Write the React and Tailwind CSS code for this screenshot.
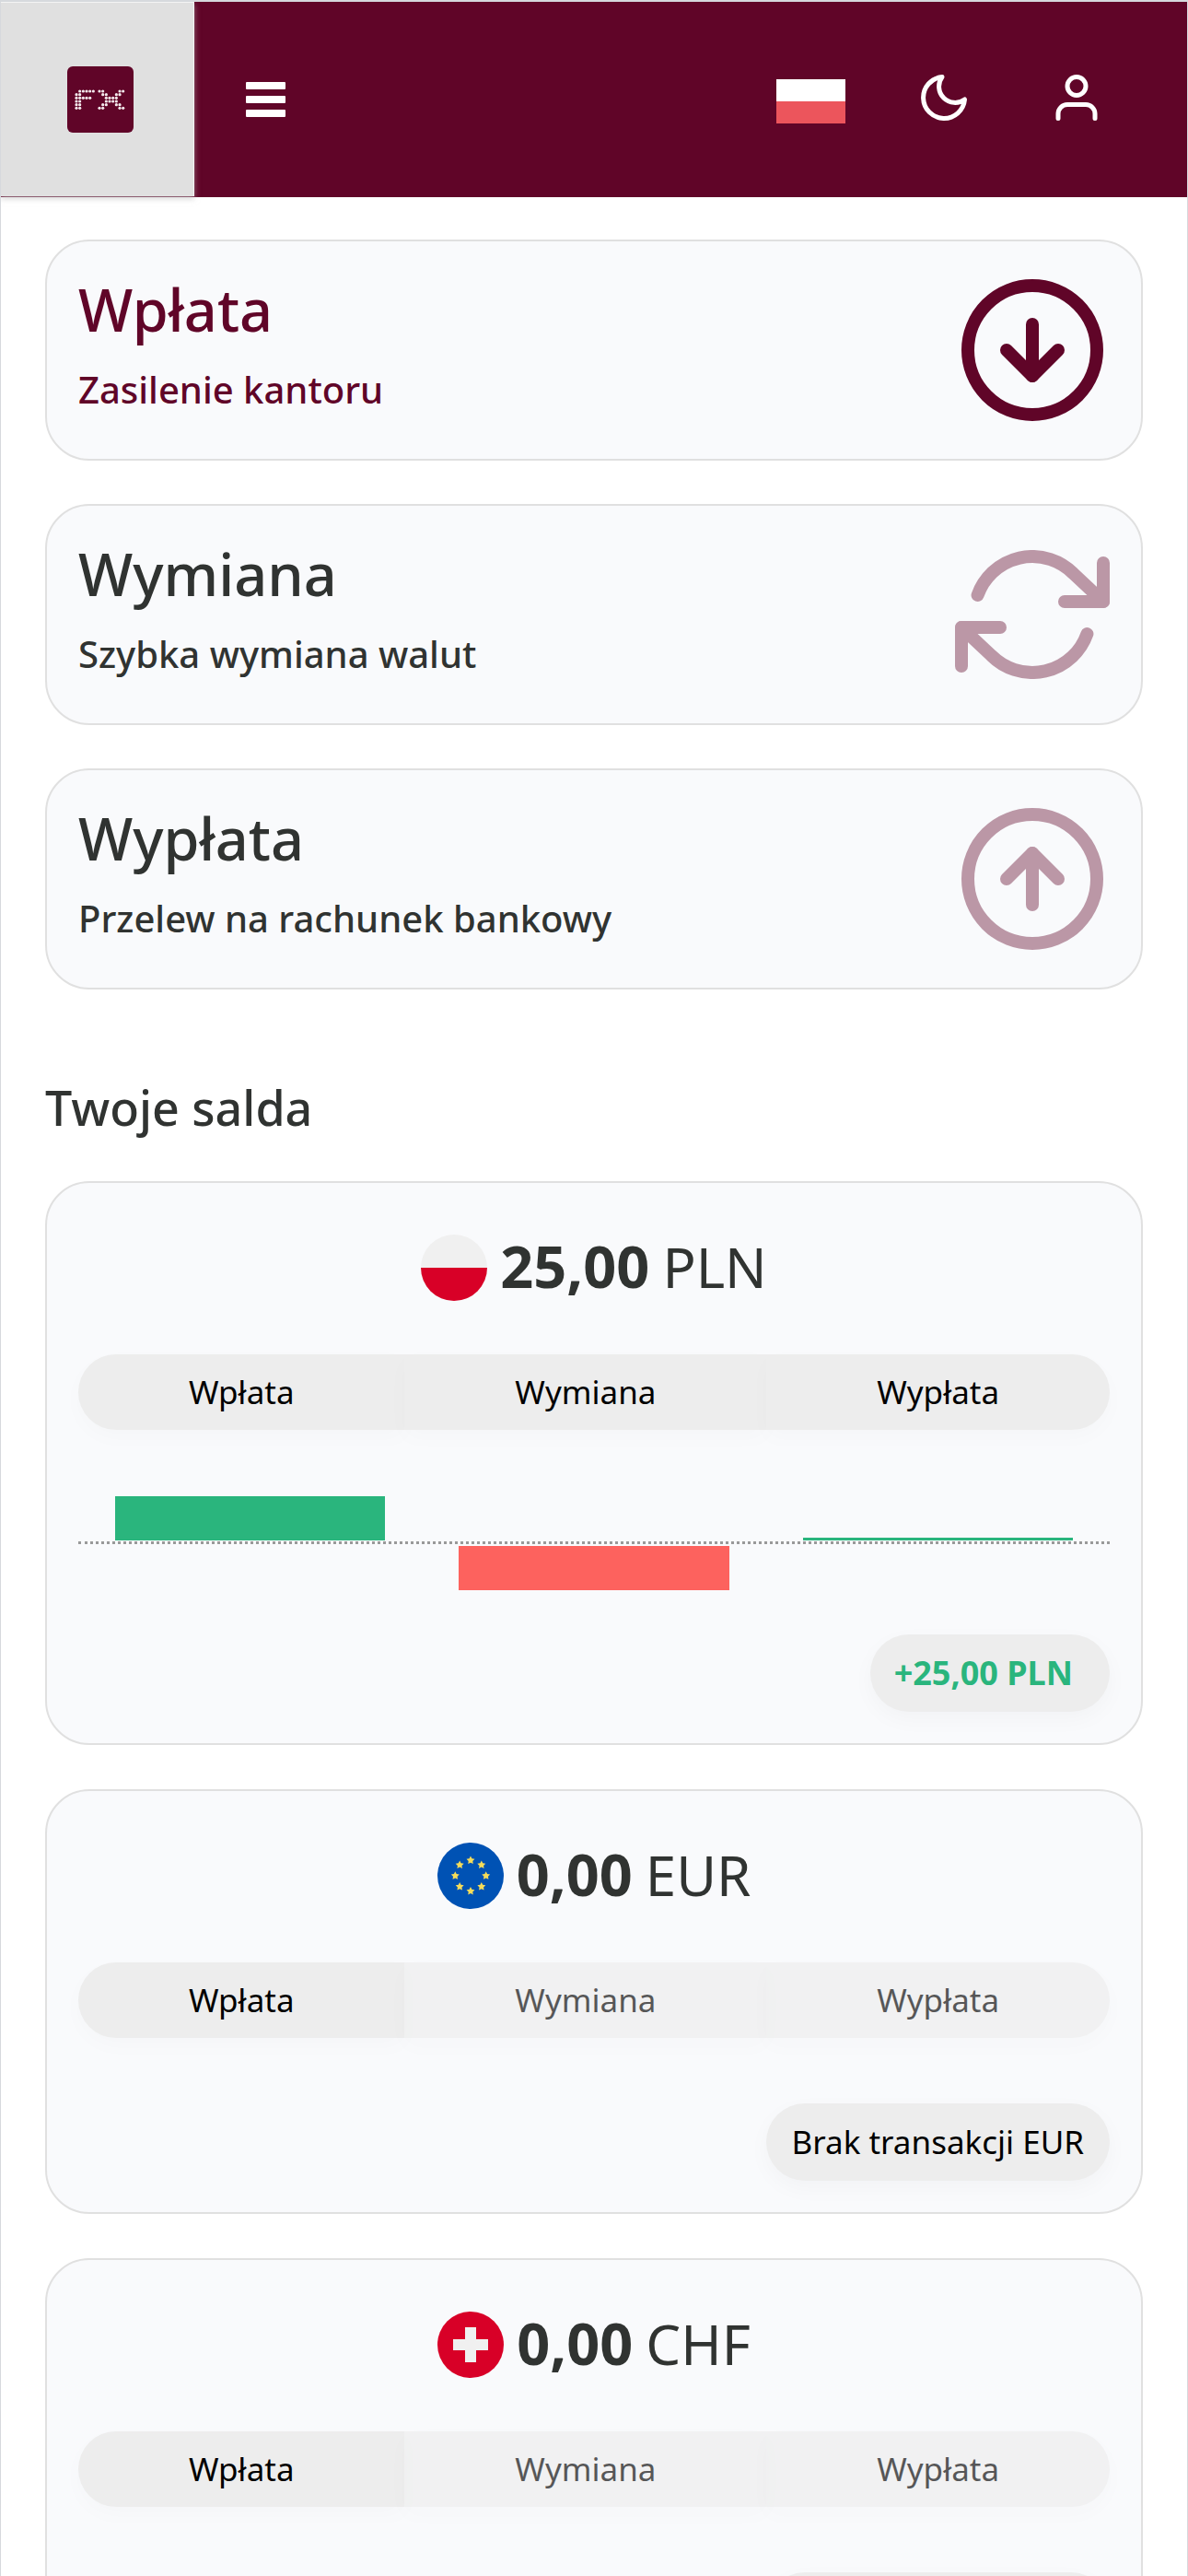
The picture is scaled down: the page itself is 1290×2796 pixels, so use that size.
import React from "react";

const GLYPH_F = [".#####", "##....", "#####.", "##....", "##....", "##...."];
const GLYPH_X = ["##....##", ".##..##.", "..####..", "..####..", ".##..##.", "##....##"];

function dots(rows, x0) {
  return rows.flatMap((row, r) =>
    [...row].map((c, i) =>
      c === "#" ? <circle key={`${x0}-${r}-${i}`} cx={x0 + i * 3.67} cy={27 + r * 3.67} r="1.6" /> : null
    )
  );
}

function Logo() {
  return (
    <svg viewBox="0 0 72 72" className="size-[72px]" aria-hidden="true">
      <rect width="72" height="72" rx="6" fill="#600528" />
      <g fill="#f3e9ec">
        {dots(GLYPH_F, 10)}
        {dots(GLYPH_X, 35)}
      </g>
    </svg>
  );
}

function LineIcon({ className, children }) {
  return (
    <svg
      viewBox="0 0 24 24"
      fill="none"
      stroke="currentColor"
      strokeWidth="2"
      strokeLinecap="round"
      strokeLinejoin="round"
      className={className}
      aria-hidden="true"
    >
      {children}
    </svg>
  );
}

const ArrowDownCircle = (
  <>
    <circle cx="12" cy="12" r="10" />
    <polyline points="8 12 12 16 16 12" />
    <line x1="12" y1="8" x2="12" y2="16" />
  </>
);

const ArrowUpCircle = (
  <>
    <circle cx="12" cy="12" r="10" />
    <polyline points="16 12 12 8 8 12" />
    <line x1="12" y1="16" x2="12" y2="8" />
  </>
);

const Refresh = (
  <>
    <polyline points="23 4 23 10 17 10" />
    <polyline points="1 20 1 14 7 14" />
    <path d="M3.51 9a9 9 0 0 1 14.85-3.36L23 10M1 14l4.64 4.36A9 9 0 0 0 20.49 15" />
  </>
);

function Star({ angle }) {
  const a = (angle * Math.PI) / 180;
  const cx = 36 + 16.7 * Math.sin(a);
  const cy = 36 - 16.7 * Math.cos(a);
  const points = Array.from({ length: 10 }, (_, i) => {
    const r = i % 2 ? 2.4 : 4.7;
    const t = (i * Math.PI) / 5;
    return `${(cx + r * Math.sin(t)).toFixed(2)},${(cy - r * Math.cos(t)).toFixed(2)}`;
  }).join(" ");
  return <polygon points={points} fill="#f5dc5a" />;
}

const FLAGS = {
  PLN: (
    <>
      <circle cx="36" cy="36" r="36" fill="#f0f0f0" />
      <path d="M0 36a36 36 0 0 0 72 0z" fill="#d80027" />
    </>
  ),
  EUR: (
    <>
      <circle cx="36" cy="36" r="36" fill="#0052b4" />
      {[0, 45, 90, 135, 180, 225, 270, 315].map((a) => (
        <Star key={a} angle={a} />
      ))}
    </>
  ),
  CHF: (
    <>
      <circle cx="36" cy="36" r="36" fill="#d80027" />
      <path d="M30 17h12v13h13v12H42v13H30V42H17V30h13z" fill="#f0f0f0" />
    </>
  ),
};

const ACTIONS = [
  { title: "Wpłata", text: "Zasilenie kantoru", icon: ArrowDownCircle, active: true },
  { title: "Wymiana", text: "Szybka wymiana walut", icon: Refresh },
  { title: "Wypłata", text: "Przelew na rachunek bankowy", icon: ArrowUpCircle },
];

const BALANCES = [
  { code: "PLN", amount: "25,00", enabled: true, change: "+25,00 PLN", bars: [48, -48, 3] },
  { code: "EUR", amount: "0,00", enabled: false },
  { code: "CHF", amount: "0,00", enabled: false },
];

function Header() {
  return (
    <header className="relative z-10 flex h-[212px] shrink-0 items-start bg-[#600528] text-white">
      <a
        href="#start"
        aria-label="FX"
        className="flex h-[211px] w-[210px] items-center justify-center border-t border-r border-[#f4f4f4] bg-[#e0e0e0] pl-1.5 shadow-[0_3px_6px_rgba(190,190,190,0.6)]"
      >
        <Logo />
      </a>
      <div className="flex h-full flex-1 items-center justify-between pr-[90px] pl-14">
        <button type="button" aria-label="Menu">
          <svg viewBox="0 0 43 38" className="h-[38px] w-[43px]" fill="currentColor" aria-hidden="true">
            <rect width="43" height="8" rx="1" />
            <rect y="15" width="43" height="8" rx="1" />
            <rect y="30" width="43" height="8" rx="1" />
          </svg>
        </button>
        <div className="flex items-center gap-[77px]">
          <button type="button" aria-label="Polski" className="pt-1">
            <svg viewBox="0 0 75 48" className="h-12 w-[75px]" aria-hidden="true">
              <rect width="75" height="24" fill="#ffffff" />
              <rect y="24" width="75" height="24" fill="#ec555c" />
            </svg>
          </button>
          <div className="flex items-center gap-[84px] pb-1">
            <button type="button" aria-label="Tryb ciemny">
              <LineIcon className="size-[60px]">
                <path d="M21 12.79A9 9 0 1 1 11.21 3 7 7 0 0 0 21 12.79z" />
              </LineIcon>
            </button>
            <button type="button" aria-label="Konto">
              <LineIcon className="size-[60px]">
                <path d="M20 21v-2a4 4 0 0 0-4-4H8a4 4 0 0 0-4 4v2" />
                <circle cx="12" cy="7" r="4" />
              </LineIcon>
            </button>
          </div>
        </div>
      </div>
    </header>
  );
}

function ActionCard({ title, text, icon, active }) {
  return (
    <a
      href="#akcja"
      className={`flex items-start justify-between rounded-[48px] border-2 border-[#e0e0e0] bg-[#f9fafc] p-[34px] font-medium ${
        active ? "text-[#600528]" : "text-[#303331]"
      }`}
    >
      <span className="flex flex-col gap-4">
        <span className="text-[63px] leading-[80px]">{title}</span>
        <span className="text-[40px] leading-[62px]">{text}</span>
      </span>
      <LineIcon className={`size-[168px] shrink-0 text-[#600528] ${active ? "" : "opacity-40"}`}>{icon}</LineIcon>
    </a>
  );
}

function Tab({ label, faded, className }) {
  return (
    <button
      type="button"
      disabled={faded}
      className={`h-[82px] flex-auto bg-[#ededed] px-8 text-[35px] text-black shadow-[0_8px_24px_rgba(0,0,0,0.02)] ${
        faded ? "opacity-65" : ""
      } ${className}`}
    >
      {label}
    </button>
  );
}

function Chart({ bars }) {
  return (
    <div className="mt-[72px]">
      <div className="grid h-[49px] grid-cols-3 items-end pb-px">
        {bars.map((v, i) => (
          <div key={i} className="mx-10 bg-[#2ab57d]" style={{ height: Math.max(v, 0) }} />
        ))}
      </div>
      <div className="border-t-3 border-dotted border-[#999999]" />
      <div className="grid h-[50px] grid-cols-3 items-start pt-0.5">
        {bars.map((v, i) => (
          <div key={i} className="mx-10 bg-[#fd625e]" style={{ height: Math.max(-v, 0) }} />
        ))}
      </div>
    </div>
  );
}

function BalanceCard({ code, amount, enabled, change, bars }) {
  return (
    <article className="flex flex-col rounded-[48px] border-2 border-[#e0e0e0] bg-[#f9fafc] px-[34px] pt-14 pb-[34px]">
      <h3 className="flex items-start justify-center leading-[68px] text-[#303331]">
        <svg viewBox="0 0 72 72" className="mr-[14px] size-[72px]" aria-hidden="true">
          {FLAGS[code]}
        </svg>
        <span className="flex items-baseline gap-[14px]">
          <span className="text-[63px] font-bold">{amount}</span>
          <span className="text-[60px]">{code}</span>
        </span>
      </h3>
      <div className="mt-[58px] flex">
        <Tab label="Wpłata" className="rounded-l-full" />
        <Tab label="Wymiana" faded={!enabled} className="" />
        <Tab label="Wypłata" faded={!enabled} className="rounded-r-full" />
      </div>
      {bars && <Chart bars={bars} />}
      <button
        type="button"
        className={`h-[84px] self-end rounded-full bg-[#ededed] shadow-[0_8px_24px_rgba(0,0,0,0.03)] ${
          change ? "mt-12 pr-10 pl-[26px] text-[36px] font-bold text-[#2ab57d]" : "mt-[71px] px-7 text-[35px] text-black"
        }`}
      >
        {change || `Brak transakcji ${code}`}
      </button>
    </article>
  );
}

export default function App() {
  return (
    <div className="flex h-screen flex-col overflow-hidden border-x border-t-2 border-[#d6d9dd] bg-white font-['Noto_Sans',sans-serif]">
      <Header />
      <main className="flex-1 overflow-y-auto px-12 pt-[46px] pb-12 [scrollbar-width:none]">
        <nav className="flex flex-col gap-[47px]">
          {ACTIONS.map((a) => (
            <ActionCard key={a.title} {...a} />
          ))}
        </nav>
        <h2 className="mt-24 mb-12 text-[52px] leading-[64px] font-medium text-[#303331]">Twoje salda</h2>
        <section className="flex flex-col gap-12">
          {BALANCES.map((b) => (
            <BalanceCard key={b.code} {...b} />
          ))}
        </section>
      </main>
    </div>
  );
}
